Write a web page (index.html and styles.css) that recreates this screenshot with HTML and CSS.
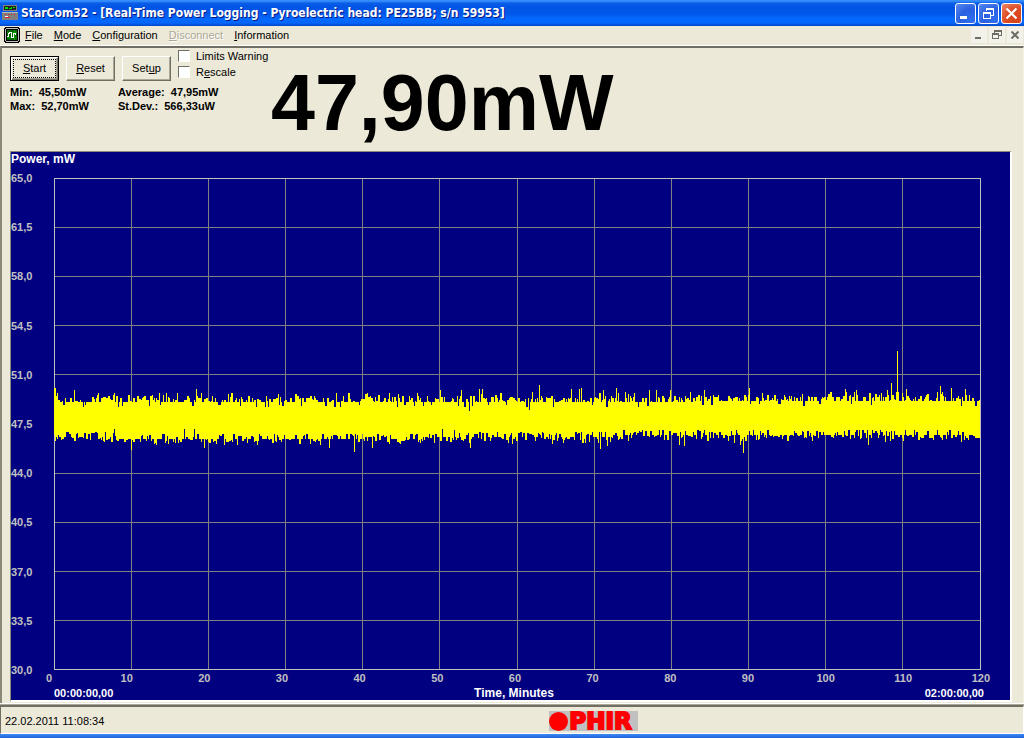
FILE: index.html
```
<!DOCTYPE html>
<html lang="en">
<head>
<meta charset="utf-8">
<title>StarCom32</title>
<link rel="stylesheet" href="styles.css">
</head>
<body>
<div class="window">
  <header class="titlebar">
    <svg class="app-icon" viewBox="0 0 16 16" shape-rendering="crispEdges" aria-hidden="true">
      <path fill="#808080" d="M1 0h14v6H1zM0 7h16v8H0z"/>
      <path fill="#202020" d="M2 1h12v4H2z"/>
      <path fill="#00e000" d="M3 2h3v2H3zM7 3h2v1H7zM9 2h1v2H9zM11 2h2v1h-2z"/>
      <path fill="#b8b8b8" d="M0 7h16v1H0z"/>
      <path fill="#e02020" d="M3 9h1v1H3zM6 9h1v1H6zM9 9h1v1H9zM12 9h1v1h-1zM3 12h5v1H3z"/>
      <path fill="#fff" d="M3 11h3v1H3z"/>
    </svg>
    <h1 class="title">StarCom32 - [Real-Time Power Logging - Pyroelectric head: PE25BB; s/n 59953]</h1>
    <div class="window-buttons">
      <button class="win-btn" aria-label="Minimize"><svg viewBox="0 0 19 19"><path fill="#fff" d="M4 12h7v3H4z"/></svg></button>
      <button class="win-btn" aria-label="Restore"><svg viewBox="0 0 19 19" shape-rendering="crispEdges"><path fill="none" stroke="#fff" d="M7.500 7V4.500h7V11.500H12M7 5.500h8M4.500 8.500h7v6h-7zM4 9.500h8"/></svg></button>
      <button class="win-btn close" aria-label="Close"><svg viewBox="0 0 19 19"><path fill="none" stroke="#fff" stroke-width="2.200" d="M4.500 4.500l10 10M14.500 4.500l-10 10"/></svg></button>
    </div>
  </header>

  <nav class="menubar">
    <svg class="doc-icon" viewBox="0 0 16 16" shape-rendering="crispEdges" aria-hidden="true">
      <path fill="#000" d="M1 0h14v1h1v14h-1v1H1v-1H0V1h1z"/>
      <path fill="#c0c0c0" d="M2 1h12v1h1v12h-1v1H2v-1H1V2h1z"/>
      <path fill="#000" d="M2 2h12v12H2z"/>
      <path fill="#006400" d="M3 3h10v10H3z"/>
      <path fill="none" stroke="#00a000" d="M3 5.500h10M3 10.500h10M10.500 3v10"/>
      <path fill="none" stroke="#fff" d="M3 9.500h1.500V6.500h1V5.500h2V10.500h2V6.500h2V8"/>
    </svg>
    <button class="menu-item"><u>F</u>ile</button>
    <button class="menu-item"><u>M</u>ode</button>
    <button class="menu-item"><u>C</u>onfiguration</button>
    <button class="menu-item" disabled><u>D</u>isconnect</button>
    <button class="menu-item"><u>I</u>nformation</button>
    <div class="doc-buttons">
      <button class="doc-btn" aria-label="Minimize document"><svg viewBox="0 0 16 16"><path fill="#6f6d62" d="M4 10h6v2H4z"/></svg></button>
      <button class="doc-btn" aria-label="Restore document"><svg viewBox="0 0 16 16" shape-rendering="crispEdges"><path fill="none" stroke="#6f6d62" d="M5.500 6V3.500h7V8.500H10M5 4.500h8M3.500 6.500h6v5h-6zM3 7.500h7"/></svg></button>
      <button class="doc-btn" aria-label="Close document"><svg viewBox="0 0 16 16"><path fill="none" stroke="#6f6d62" stroke-width="2" d="M4.500 4.500l7 7M11.500 4.500l-7 7"/></svg></button>
    </div>
  </nav>

  <main class="client">
    <section class="top">
      <div class="controls">
        <div class="actions">
          <button class="btn default"><span><u>S</u>tart</span></button>
          <button class="btn"><span><u>R</u>eset</span></button>
          <button class="btn"><span>Set<u>u</u>p</span></button>
          <div class="checks">
            <label class="check"><input type="checkbox">Limits Warning</label>
            <label class="check"><input type="checkbox"><span>R<u>e</u>scale</span></label>
          </div>
        </div>
        <div class="stats">
          <span>Min:&nbsp; 45,50mW</span><span>Average:&nbsp; 47,95mW</span>
          <span>Max:&nbsp; 52,70mW</span><span>St.Dev.:&nbsp; 566,33uW</span>
        </div>
      </div>
      <output class="readout">47,90mW</output>
    </section>

    <section class="chart">
      <div class="chart-title">Power, mW</div>
      <div class="y-axis">
        <span>65,0</span><span>61,5</span><span>58,0</span><span>54,5</span><span>51,0</span><span>47,5</span><span>44,0</span><span>40,5</span><span>37,0</span><span>33,5</span><span>30,0</span>
      </div>
      <svg class="plot" viewBox="0 0 927 492" preserveAspectRatio="none" shape-rendering="crispEdges" role="img" aria-label="Power over time">
        <path class="grid" id="grid"/>
        <path class="frame" d="M.5 .5h926v491H.5z"/>
        <path class="trace" id="trace"/>
      </svg>
      <div class="x-axis">
        <span>0</span><span>10</span><span>20</span><span>30</span><span>40</span><span>50</span><span>60</span><span>70</span><span>80</span><span>90</span><span>100</span><span>110</span><span>120</span>
      </div>
      <div class="times">
        <span>00:00:00,00</span><span class="x-title">Time, Minutes</span><span>02:00:00,00</span>
      </div>
    </section>
  </main>

  <footer class="statusbar">
    <span class="clock">22.02.2011 11:08:34</span>
    <div class="logo"><i class="logo-dot"></i><span class="logo-text">PHIR</span></div>
  </footer>
  <div class="window-edge"></div>
</div>
<script src="chart.js"></script>
</body>
</html>
```
FILE: chart.js
```
(function () {
  var WIDTH = 926, HEIGHT = 491;
  var grid = '';
  for (var i = 1; i < 12; i++) grid += 'M' + (Math.floor(i * WIDTH / 12) + 0.5) + ' 0V' + HEIGHT;
  for (var j = 1; j < 10; j++) grid += 'M0 ' + (Math.round(j * HEIGHT / 10) + 0.5) + 'H' + WIDTH;
  document.getElementById('grid').setAttribute('d', grid);

  // Highest and lowest readings at single columns: [column, y]
  var peaks = [[0,210],[1,210],[2,218],[20,212],[60,215],[105,215],[142,211],[147,215],[294,215],[313,215],[335,215],
    [386,212],[407,212],[425,211],[428,211],[478,214],[485,207],[517,211],[525,211],[527,210],[549,212],
    [562,210],[571,214],[595,212],[602,212],[616,212],[636,214],[650,212],[695,210],[791,211],[802,212],
    [833,212],[837,205],[842,214],[843,173],[844,214],[852,211],[886,208],[897,210],[911,211],[415,233],[475,232],[106,227]];
  var lows = [[77,272],[150,270],[275,270],[300,274],[318,270],[416,270],[458,266],[498,266],[546,271],
    [553,268],[625,267],[630,268],[680,265],[686,267],[689,275],[814,267],[831,264],[907,264],
    [60,251],[130,251],[140,251],[388,251],[400,252]];
  var seed = 59953;
  function random() {
    seed = (seed * 48271) % 2147483647;
    return seed / 2147483647;
  }
  function upTo(n) { return Math.floor(random() * n); }
  var top = [], bottom = [], x = 0, base, r, t, b, run;
  while (x < WIDTH) {
    base = x > 640 ? 223 : 224;
    r = random();
    t = r < 0.35 ? base : r < 0.66 ? base - 1 - upTo(4) : r < 0.85 ? base - 4 - upTo(3) :
      r < 0.92 ? base - 7 - upTo(3) : base + 3 + upTo(3);
    run = random() < 0.65 ? 1 : 2;
    while (run-- && x < WIDTH) top[x++] = t;
  }
  x = 0;
  while (x < WIDTH) {
    base = x < 60 ? 259 : x < 370 ? 261 : x < 560 ? 259 : 257;
    r = random();
    b = r < 0.3 ? base : r < 0.62 ? base - 2 - upTo(4) : r < 0.9 ? base + 1 + upTo(3) : base + 4 + upTo(3);
    run = random() < 0.65 ? 1 : 2;
    while (run-- && x < WIDTH) bottom[x++] = b;
  }
  peaks.forEach(function (p) { top[p[0]] = p[1]; });
  lows.forEach(function (p) { bottom[p[0]] = p[1]; });
  var trace = '';
  for (x = 0; x < WIDTH; x++) trace += 'M' + x + ' ' + top[x] + 'h1V' + bottom[x] + 'h-1z';
  document.getElementById('trace').setAttribute('d', trace);
})();
```
FILE: styles.css
```
* { box-sizing: border-box; }
body {
  margin: 0;
  background: #ece9d8;
  color: #000;
  font: 11px/14px "Liberation Sans", Arial, sans-serif;
}
button { font: inherit; color: inherit; padding: 0; margin: 0; }
.window { min-height: 100vh; display: flex; flex-direction: column; }

.titlebar {
  display: flex;
  align-items: center;
  height: 26px;
  padding: 0 2px 0 2px;
  background: linear-gradient(#2f86fb 0, #3b93ff 1px, #0a5ee8 3px, #0054e3 7px, #0058ea 14px, #0569ff 19px, #0466fb 23px, #0047c6 26px);
}
.app-icon { width: 16px; height: 16px; margin-right: 3px; }
.title {
  flex: 1;
  margin: 0;
  color: #fff;
  font: bold 12px/16px "DejaVu Sans Condensed", "DejaVu Sans", sans-serif;
  text-shadow: 1px 1px 0 #0a1883;
  white-space: nowrap;
}
.window-buttons { display: flex; gap: 2px; }
.win-btn {
  width: 21px;
  height: 21px;
  border: 1px solid #fff;
  border-radius: 3px;
  background: radial-gradient(circle at 80% 85%, #2f6ff0, #2a5fe0 50%, #5a8cf0);
}
.win-btn.close { background: radial-gradient(circle at 80% 85%, #d8431a, #dd4a20 50%, #ec8a6c); }
.win-btn svg, .doc-btn svg { display: block; width: 100%; height: 100%; }

.menubar {
  display: flex;
  align-items: center;
  height: 20px;
  padding: 0 1px 1px 4px;
  border-bottom: 1px solid #fff;
}
.doc-icon { width: 16px; height: 16px; margin-right: 5px; }
.menu-item { border: 0; background: none; margin-right: 11px; }
.menu-item:disabled { color: #aca899; text-shadow: 1px 1px 0 #fff; }
.doc-buttons { display: flex; gap: 2px; margin-left: auto; }
.doc-btn { width: 16px; height: 16px; border: 0; background: #f3f2ea; }

.client {
  flex: 1;
  display: flex;
  flex-direction: column;
  border: solid;
  border-width: 2px 1px 0 2px;
  border-color: #716f64 #f5f3e8 #fff #8b887a;
  padding: 0 11px 3px 8px;
}
.top { display: flex; height: 103px; }
.controls { width: 261px; }
.actions { display: flex; gap: 7px; padding-top: 1px; }
.btn {
  flex: none;
  width: 49px;
  height: 25px;
  margin-top: 7px;
  border: 1px solid;
  border-color: #fff #716f64 #716f64 #fff;
  box-shadow: inset -1px -1px 0 #aca899;
  background: #ece9d8;
}
.btn span { display: block; margin: 2px; line-height: 19px; }
.btn.default { border-color: #000; box-shadow: inset 1px 1px 0 #fff, inset -1px -1px 0 #716f64, inset -2px -2px 0 #aca899; }
.btn.default span { border: 1px dotted #000; line-height: 17px; }
.checks { display: flex; flex-direction: column; gap: 2px; }
.check { display: flex; align-items: center; gap: 6px; height: 14px; white-space: nowrap; }
.check input {
  appearance: none;
  flex: none;
  width: 12px;
  height: 12px;
  margin: 0;
  background: #fff;
  border: 1px solid;
  border-color: #716f64 #fff #fff #716f64;
}
.stats {
  display: grid;
  grid-template-columns: 108px auto;
  margin-top: 4px;
  font-weight: bold;
  white-space: nowrap;
}
.readout { font: bold 79px/80px "Liberation Sans", Arial, sans-serif; padding-top: 15px; }

.chart {
  flex: 1;
  display: grid;
  grid-template-columns: 43px 1fr 29px;
  grid-template-rows: 26px 1fr 16px 14px;
  background: #000080;
  border: solid;
  border-width: 1px 2px 2px 1px;
  border-color: #8b887a #fff #fff #8b887a;
  color: #c0c0c0;
  font-weight: bold;
}
.chart-title { grid-column: 1 / -1; color: #fff; font-size: 12px; }
.y-axis { display: flex; flex-direction: column; justify-content: space-between; }
.y-axis span { display: flex; align-items: center; height: 0; }
.plot { display: block; width: 100%; height: 100%; min-height: 0; }
.grid { fill: none; stroke: #808080; }
.frame { fill: none; stroke: #c0c0c0; }
.trace { fill: #ff0; }
.x-axis { grid-column: 2; display: flex; justify-content: space-between; margin-left: -5px; padding-top: 1px; }
.x-axis span { display: flex; justify-content: center; width: 0; }
.times { grid-column: 2 / -1; display: flex; justify-content: space-between; padding-right: 26px; color: #fff; }
.x-title { margin-right: 10px; font-size: 12px; }

.statusbar {
  display: flex;
  align-items: center;
  height: 29px;
  padding: 2px 4px 0;
  border: solid;
  border-width: 2px 1px 1px 1px;
  border-color: #716f64 #fff #fff #716f64;
  box-shadow: 0 -1px 0 #aca899, 0 -2px 0 #fff;
}
.logo {
  display: flex;
  align-items: center;
  width: 89px;
  height: 20px;
  margin-left: 445px;
  background: #c0c0c0;
  color: #f00;
}
.logo-dot { flex: none; width: 19px; height: 19px; border-radius: 50%; background: #f00; }
.logo-text { font: bold 23px/20px "DejaVu Sans", sans-serif; -webkit-text-stroke: 2px #f00; padding-left: 1px; }
.window-edge { height: 4px; background: linear-gradient(#3b8af5, #1f62d8); }
```
